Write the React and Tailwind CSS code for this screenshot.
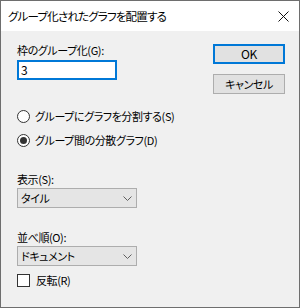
import React, { useState } from "react";

const font = "[font-family:'Noto_Sans_CJK_JP','Noto_Sans',sans-serif] [font-feature-settings:'palt']";

function Radio({ checked, label, onClick }) {
    return (
        <div className="flex h-[16px] items-center gap-[5px] cursor-default" onClick={onClick}>
            <span className="flex h-[13px] w-[13px] items-center justify-center rounded-full border border-[#333333] bg-white">
                {checked ? <span className="h-[7px] w-[7px] rounded-full bg-[#333333]"></span> : null}
            </span>
            <span>{label}</span>
        </div>
    );
}

function Select({ value }) {
    return (
        <div className="flex h-[20px] w-[120px] items-center justify-between border border-[#adadad] bg-[#e5e5e5] pl-[3px] pr-[4px]">
            <span>{value}</span>
            <svg width="9" height="5" viewBox="0 0 9 5" className="mt-[1px]">
                <path d="M0.5 0.5 L4.5 4.5 L8.5 0.5" fill="none" stroke="#606060" strokeWidth="1" />
            </svg>
        </div>
    );
}

export default function App() {
    const [mode, setMode] = useState("d");
    const [reverse, setReverse] = useState(false);

    return (
        <div className={`flex h-[308px] w-[300px] flex-col border border-[#6e6e6e] bg-[#f0f0f0] text-[11px] leading-[16px] tracking-[-0.4px] text-black ${font}`}>
            <div className="flex h-[30px] items-center justify-between bg-white pl-[7px] pr-[10px] text-[11.5px] tracking-[-0.8px]">
                <span>グループ化されたグラフを配置する</span>
                <svg width="11" height="11" viewBox="0 0 11 11">
                    <path d="M0.5 0.5 L10.5 10.5 M10.5 0.5 L0.5 10.5" stroke="#111111" strokeWidth="1" />
                </svg>
            </div>
            <div className="flex flex-1 justify-between pl-[16px] pr-[14px]">
                <div className="flex flex-col pt-[11px]">
                    <label>枠のグループ化(G):</label>
                    <div className="mt-[2px] flex h-[20px] w-[100px] items-center border-2 border-[#0078d7] bg-white pl-[2px] text-[12px]">
                        3
                    </div>
                    <div className="mt-[28px] flex flex-col gap-[8px]">
                        <Radio checked={mode === "s"} label="グループにグラフを分割する(S)" onClick={() => setMode("s")} />
                        <Radio checked={mode === "d"} label="グループ間の分散グラフ(D)" onClick={() => setMode("d")} />
                    </div>
                    <label className="mt-[23px]">表示(S):</label>
                    <div className="mt-[1px]">
                        <Select value="タイル" />
                    </div>
                    <label className="mt-[21px]">並べ順(O):</label>
                    <div className="mt-[1px]">
                        <Select value="ドキュメント" />
                    </div>
                    <div className="mt-[6px] flex h-[16px] items-center gap-[6px]" onClick={() => setReverse(!reverse)}>
                        <span className="flex h-[13px] w-[13px] items-center justify-center border border-[#333333] bg-white text-[10px] leading-none">
                            {reverse ? "✓" : ""}
                        </span>
                        <span>反転(R)</span>
                    </div>
                </div>
                <div className="flex flex-col gap-[10px] pt-[13px]">
                    <button className="h-[20px] w-[72px] border-2 border-[#0078d7] bg-[#e1e1e1] text-[12px] leading-none">
                        OK
                    </button>
                    <button className="h-[20px] w-[72px] border border-[#adadad] bg-[#e1e1e1] leading-none">
                        キャンセル
                    </button>
                </div>
            </div>
        </div>
    );
}
